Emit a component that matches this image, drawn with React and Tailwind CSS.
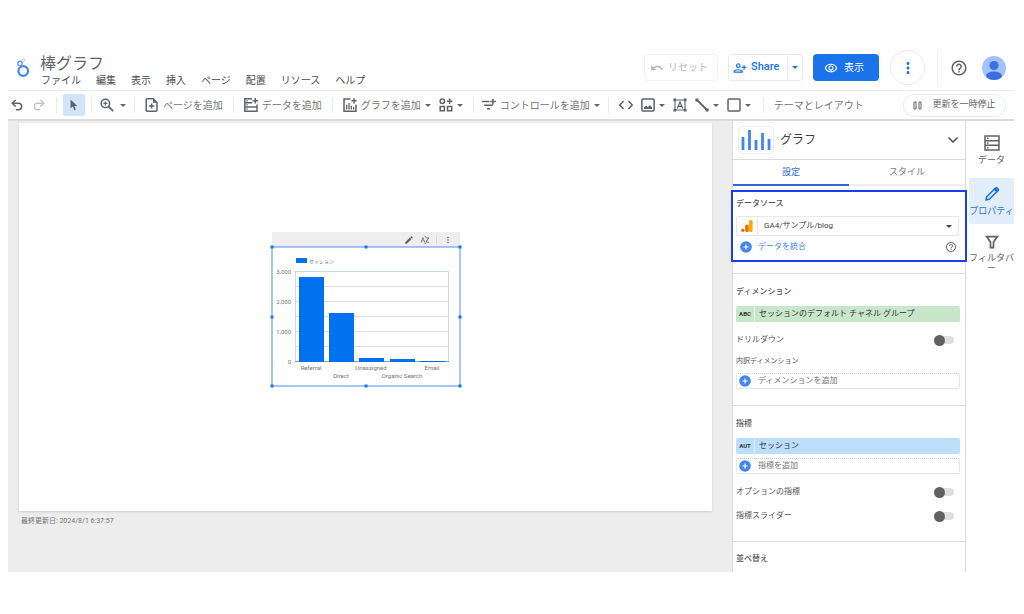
import { useState } from "react";
import {
  MdEdit,
  MdHelpOutline,
  MdMoreVert,
  MdOutlinePersonAddAlt1,
  MdOutlineRemoveRedEye,
  MdSortByAlpha,
  MdUndo,
} from "react-icons/md";
import { Undo2, Redo2 } from "lucide-react";

const menus = ["ファイル", "編集", "表示", "挿入", "ページ", "配置", "リソース", "ヘルプ"];

const bars = [
  { label: "Referral", x: 27, y: 30, low: false },
  { label: "Direct", x: 57, y: 66, low: true },
  { label: "Unassigned", x: 87, y: 111, low: false },
  { label: "Organic Search", x: 118, y: 112, low: true },
  { label: "Email", x: 148, y: 114, low: false },
];

const handles = [
  [0, 0], [94, 0], [188, 0],
  [0, 70], [188, 70],
  [0, 139], [94, 139], [188, 139],
];

function Caret() {
  return (
    <svg viewBox="0 0 6 3" className="w-1.5 h-[3px] shrink-0" fill="currentColor">
      <path d="M0 0h6L3 3z" />
    </svg>
  );
}

function Sep() {
  return <div className="w-px h-4 bg-[#e8eaed] shrink-0" />;
}

function Plus() {
  return (
    <svg viewBox="0 0 12 12" className="w-3 h-3 shrink-0">
      <circle cx="6" cy="6" r="5.8" fill="#4285f4" />
      <path d="M6 3.4v5.2M3.4 6h5.2" stroke="#fff" strokeWidth="1.2" />
    </svg>
  );
}

function Logo() {
  return (
    <svg viewBox="0 0 14 20" className="w-3.5 h-5 shrink-0" fill="none" stroke="#4285f4">
      <circle cx="7.2" cy="13" r="4.8" strokeWidth="2.2" />
      <circle cx="4" cy="5.4" r="2.2" strokeWidth="1.4" stroke="#669df6" />
      <circle cx="7.4" cy="2.2" r="1.4" strokeWidth="1" stroke="#aecbfa" />
    </svg>
  );
}

function Avatar() {
  return (
    <svg viewBox="0 0 24 24" className="w-6 h-6">
      <clipPath id="avatar">
        <circle cx="12" cy="12" r="12" />
      </clipPath>
      <g clipPath="url(#avatar)">
        <rect width="24" height="24" fill="#a0c3ff" />
        <circle cx="12" cy="9.5" r="4.6" fill="#3b6fe0" />
        <ellipse cx="12" cy="20" rx="8" ry="4.6" fill="#3b6fe0" />
      </g>
    </svg>
  );
}

// 14px outline icons of the toolbar share this frame
function Icon({ children }) {
  return (
    <svg viewBox="0 0 14 14" className="w-3.5 h-3.5 shrink-0" fill="none" stroke="currentColor" strokeWidth="1.5">
      {children}
    </svg>
  );
}

function ZoomIcon() {
  return (
    <Icon>
      <circle cx="5.4" cy="5.4" r="4.2" />
      <path d="M8.600 8.600l4.600 4.600" strokeWidth="1.800" />
      <path d="M5.400 3.400v4M3.400 5.400h4" strokeWidth="1.200" />
    </Icon>
  );
}

function AddPageIcon() {
  return (
    <Icon>
      <path d="M8.200.8H2.200q-1 0-1 1v10.400q0 1 1 1h8.800q1 0 1-1V4.600z" />
      <path d="M8 .8v4h4z" fill="currentColor" stroke="none" />
      <path d="M6.600 5.400v5.200M4 8h5.200" />
    </Icon>
  );
}

function AddDataIcon() {
  return (
    <Icon>
      <path d="M8 .8H.8v4h7.400M.8 4.800v4.200h12.200V6.500M.8 9v4.200h12.200V9" />
      <path d="M11.300 0v5.400M8.600 2.700H14" />
      <path d="M2.300 2.800h1.400M2.300 6.900h1.400M2.300 11.100h1.400" strokeWidth="1.200" />
    </Icon>
  );
}

function AddChartIcon() {
  return (
    <Icon>
      <path d="M7.500 1H1v12.200h12V6.800" />
      <path d="M11 .2v5.200M8.400 2.800h5.200" />
      <path d="M3.700 11.500V6.800M6 11.500V5M8.300 11.500V7.800M10.600 11.500V9" strokeWidth="1.300" />
    </Icon>
  );
}

function WidgetsIcon() {
  return (
    <Icon>
      <circle cx="3.3" cy="3.3" r="2.2" />
      <path d="M10.6.6v5.4M7.900 3.300h5.400M1.200 8.600h4.200v4.200H1.200zM8.500 8.600h4.200v4.200H8.500z" />
    </Icon>
  );
}

function ControlIcon() {
  return (
    <Icon>
      <path d="M0 3.600h7.400M2.200 7.200h8.600M4.800 10.800h3.400M11 .8v5.600M8.200 3.600h5.600" />
    </Icon>
  );
}

function CodeIcon() {
  return (
    <Icon>
      <path d="M4.600 3 .9 7l3.700 4M9.400 3l3.700 4-3.700 4" />
    </Icon>
  );
}

function ImageIcon() {
  return (
    <Icon>
      <rect x=".9" y=".9" width="12.200" height="12.200" rx="1" />
      <path d="M3 11V9.500L5.200 7.500 7 9.200 9 7l2.200 2.500V11z" fill="currentColor" stroke="none" />
    </Icon>
  );
}

function TextBoxIcon() {
  return (
    <Icon>
      <path d="M2 2h10v10H2z" strokeWidth="1.100" />
      <path d="M4.300 10.400 7 3.800l2.700 6.600M5.200 8.400h3.600" strokeWidth="1.200" />
      <path
        d="M.4.400h2.800v2.800H.4zM10.800.400h2.800v2.800h-2.800zM.4 10.800h2.800v2.800H.4zM10.800 10.800h2.800v2.800h-2.800z"
        fill="currentColor"
        stroke="none"
      />
    </Icon>
  );
}

function LineIcon() {
  return (
    <Icon>
      <path d="M2 2l10 10" strokeWidth="1.800" />
      <path d="M.4.600h3v3h-3zM10.600 10.600h3v3h-3z" fill="currentColor" stroke="none" />
    </Icon>
  );
}

function RectIcon() {
  return (
    <Icon>
      <rect x="1" y="1" width="12" height="12" rx="1" />
    </Icon>
  );
}

function PropertyIcon() {
  return (
    <svg viewBox="0 0 16 16" className="w-4 h-4 shrink-0" fill="none" stroke="currentColor" strokeWidth="1.6">
      <path d="M2 14l.7-3.200L10.800 2.700l2.500 2.500-8.100 8.100z" strokeLinejoin="round" />
      <path d="M9.300 3.200 11.300 1.200q1-.8 2 0l1.500 1.500q.8 1 0 2L12.800 6.700z" fill="currentColor" stroke="none" />
    </svg>
  );
}

function FilterIcon() {
  return (
    <svg viewBox="0 0 16 16" className="w-4 h-4 shrink-0" fill="none" stroke="currentColor" strokeWidth="1.7">
      <path d="M2.600 2.600h10.800L9.500 8v5.600h-3V8z" />
    </svg>
  );
}

function Header() {
  return (
    <header className="flex items-center h-[46px] border-b border-[#e8eaed] text-[#5f6368]">
      <div className="pl-2">
        <Logo />
      </div>
      <div className="pl-2.5 pt-2">
        <h1 className="text-base leading-[18px]">棒グラフ</h1>
        <nav className="flex gap-[15px] pl-px text-[10px] leading-4 text-[#4a4d51]">
          {menus.map((m) => (
            <button key={m} type="button" className="whitespace-nowrap">
              {m}
            </button>
          ))}
        </nav>
      </div>

      <div className="flex items-center ml-auto shrink-0 text-[10px]">
        <button
          type="button"
          disabled
          className="flex items-center justify-center gap-1 w-[74px] h-[27px] pr-1 border border-[#f1f3f4] rounded-sm text-[#b4b7ba]"
        >
          <MdUndo size={14} />
          リセット
        </button>

        <div className="flex ml-2.5 h-[27px] border border-[#e8eaed] rounded-sm text-[#1a73e8]">
          <button type="button" className="flex items-center gap-1 px-1 w-[58px] text-[11px] font-medium">
            <MdOutlinePersonAddAlt1 size={14} />
            Share
          </button>
          <button type="button" aria-label="共有オプション" className="flex items-center px-1 border-l border-[#e8eaed]">
            <Caret />
          </button>
        </div>

        <button
          type="button"
          className="flex items-center justify-center gap-1.5 ml-2.5 w-[66px] h-[27px] pr-1 rounded-sm bg-[#1a73e8] text-white"
        >
          <MdOutlineRemoveRedEye size={14} />
          表示
        </button>

        <button
          type="button"
          aria-label="その他"
          className="flex items-center justify-center ml-[11px] w-[35px] h-[35px] border border-[#e8eaed] rounded-full text-[#1a73e8]"
        >
          <MdMoreVert size={18} />
        </button>

        <div className="ml-3 w-px h-8 bg-[#eceef0]" />
        <button type="button" aria-label="ヘルプ" className="ml-3">
          <MdHelpOutline size={18} />
        </button>
        <button type="button" aria-label="アカウント" className="ml-3.5 mr-2">
          <Avatar />
        </button>
      </div>
    </header>
  );
}

function Toolbar() {
  const item = "flex items-center gap-1 shrink-0 whitespace-nowrap";
  const text = "text-[#757575]";

  return (
    <div className="flex items-center h-[30px] border-b-2 border-[#dadce0] text-[10px] text-[#5f6368]">
      <div className="flex gap-2 pl-0.5 pr-2.5">
        <button type="button" aria-label="元に戻す">
          <Undo2 size={14} strokeWidth={2.5} />
        </button>
        <button type="button" aria-label="やり直す" className="text-[#c4c7ca]">
          <Redo2 size={14} strokeWidth={2.5} />
        </button>
      </div>
      <Sep />
      <div className="px-1.5">
        <button
          type="button"
          aria-label="選択"
          className="flex items-center justify-center w-[22px] h-[22px] rounded-xs bg-[#d2e3fc]"
        >
          <svg viewBox="0 0 8 12" className="w-2 h-3" fill="currentColor">
            <path d="M.5.5v9l2.200-2 1.600 3.800 1.600-.7-1.600-3.700h3z" />
          </svg>
        </button>
      </div>
      <Sep />
      <div className="px-2">
        <button type="button" aria-label="ズーム" className="flex items-center gap-1.5">
          <ZoomIcon />
          <Caret />
        </button>
      </div>
      <Sep />
      <div className="px-2.5">
        <button type="button" className={item}>
          <AddPageIcon />
          <span className={text}>ページを追加</span>
        </button>
      </div>
      <Sep />
      <div className="px-2.5">
        <button type="button" className={item}>
          <AddDataIcon />
          <span className={text}>データを追加</span>
        </button>
      </div>
      <Sep />
      <div className="flex gap-2 px-2.5">
        <button type="button" className={item}>
          <AddChartIcon />
          <span className={text}>グラフを追加</span>
          <Caret />
        </button>
        <button type="button" aria-label="ビジュアリゼーション" className={item}>
          <WidgetsIcon />
          <Caret />
        </button>
      </div>
      <Sep />
      <div className="px-2">
        <button type="button" className={item}>
          <ControlIcon />
          <span className={text}>コントロールを追加</span>
          <Caret />
        </button>
      </div>
      <Sep />
      <div className="flex gap-2 pl-2.5 pr-3">
        <button type="button" aria-label="URL 埋め込み" className={item}>
          <CodeIcon />
        </button>
        <button type="button" aria-label="画像" className={item}>
          <ImageIcon />
          <Caret />
        </button>
        <button type="button" aria-label="テキスト" className={item}>
          <TextBoxIcon />
        </button>
        <button type="button" aria-label="線" className={item}>
          <LineIcon />
          <Caret />
        </button>
        <button type="button" aria-label="図形" className={item}>
          <RectIcon />
          <Caret />
        </button>
      </div>
      <Sep />
      <button type="button" className={`px-2.5 whitespace-nowrap ${text}`}>
        テーマとレイアウト
      </button>

      <button
        type="button"
        className="flex items-center justify-center gap-2.5 ml-auto mr-2 w-[103px] h-[23px] shrink-0 border border-[#e8eaed] rounded-full text-[9px]"
      >
        <svg viewBox="0 0 9 9" className="w-[9px] h-[9px]" fill="none" stroke="currentColor">
          <path d="M1 1h2v7H1zM6 1h2v7H6z" />
        </svg>
        更新を一時停止
      </button>
    </div>
  );
}

function BarChart() {
  return (
    <svg viewBox="0 0 188 139" className="w-[188px] h-[139px] overflow-visible" fontSize="6" fill="#757575">
      <rect x="24" y="11" width="11" height="5" fill="#0072f0" />
      <text x="37" y="15.5" fontSize="5">
        セッション
      </text>

      {[39.5, 54.5, 69.5, 84.5, 99.5].map((y) => (
        <path key={y} d={`M24 ${y}h152`} stroke="#e0e0e0" />
      ))}
      <rect x="23.5" y="24.5" width="153" height="90" fill="none" stroke="#c6dafa" />

      {["3,000", "2,000", "1,000", "0"].map((t, i) => (
        <text key={t} x="19" y={26.5 + i * 30} textAnchor="end">
          {t}
        </text>
      ))}

      <path d="M23 114.5h154" stroke="#7f9cc4" />
      {bars.map((b) => (
        <g key={b.label}>
          <rect x={b.x} y={b.y} width="25" height={115 - b.y} fill="#0072f0" />
          <text x={b.x + 12} y={b.low ? 131 : 123} textAnchor="middle">
            {b.label}
          </text>
        </g>
      ))}

      <rect width="188" height="139" fill="none" stroke="#4a90f0" />
      {handles.map(([x, y]) => (
        <rect key={`${x}-${y}`} x={x - 1.5} y={y - 1.5} width="3" height="3" fill="#1a73e8" />
      ))}
    </svg>
  );
}

function Canvas() {
  return (
    <main className="flex-1 min-w-0 bg-[#ededed] pl-[11px] pr-5 pt-0.5">
      <div className="relative w-full aspect-[692/387] bg-white shadow-sm">
        {/* selected chart, placed freely on the report page */}
        <div className="absolute left-[253px] top-[109px] w-[188px]">
          <div className="flex items-center justify-end gap-1.5 h-[15px] pr-[7px] bg-[#eeeeee] text-[#5f6368]">
            <MdEdit size={10} />
            <MdSortByAlpha size={10} />
            <div className="w-px h-2 bg-[#dadce0]" />
            <MdMoreVert size={10} />
          </div>
          <BarChart />
        </div>
      </div>
      <p className="pl-0.5 pt-1 text-[7px] leading-3 text-[#757575]">最終更新日: 2024/8/1 6:37:57</p>
    </main>
  );
}

function Toggle({ id, label }) {
  return (
    <div className="flex items-center justify-between h-4 pr-1.5">
      <label htmlFor={id}>{label}</label>
      <input
        id={id}
        type="checkbox"
        className="appearance-none flex items-center w-5 h-2 rounded-full bg-[#e0e0e0] before:w-[11px] before:h-[11px] before:rounded-full before:bg-[#616161] checked:before:ml-auto"
      />
    </div>
  );
}

function Chip({ type, className, children }) {
  return (
    <button type="button" className={`flex items-center w-full h-4 rounded-xs text-left text-[#333333] ${className}`}>
      <span className="flex items-center justify-center w-[19px] h-full border-r border-white/50 text-[6px] font-bold">
        {type}
      </span>
      <span className="pl-1">{children}</span>
    </button>
  );
}

function AddField({ children }) {
  return (
    <button
      type="button"
      className="flex items-center gap-[7px] w-full h-4 px-0.5 border border-dotted border-[#cccccc] rounded-xs text-[#757575]"
    >
      <Plus />
      {children}
    </button>
  );
}

function Panel() {
  const [tab, setTab] = useState("設定");

  return (
    <aside className="w-[234px] shrink-0 border-x border-[#dadce0] bg-white text-[8px] leading-3 text-[#555555]">
      <div className="flex items-center gap-1.5 h-[39px] pl-[5px] pr-[7px] border-b border-[#dadce0]">
        <div className="flex items-center justify-center w-9 h-7 border border-[#eceef0] rounded-sm">
          <svg viewBox="0 0 30 20" className="w-[30px] h-5" stroke="#4285f4" strokeWidth="2.8">
            <path d="M2 7v13M8.500 0v20M15 10v10M21.500 3v17M28 9v11" />
          </svg>
        </div>
        <h2 className="text-xs text-[#424242]">グラフ</h2>
        <svg viewBox="0 0 10 6" className="w-2.5 h-1.5 ml-auto" fill="none" stroke="#424242" strokeWidth="1.3">
          <path d="M.5.500 5 5 9.500.500" />
        </svg>
      </div>

      <div role="tablist" className="flex text-[9px]">
        {["設定", "スタイル"].map((t) => (
          <button
            key={t}
            type="button"
            role="tab"
            aria-selected={tab === t}
            onClick={() => setTab(t)}
            className={`flex-1 h-[26px] border-b-2 ${
              tab === t ? "border-[#3367d6] text-[#3367d6]" : "border-[#eeeeee] text-[#757575]"
            }`}
          >
            {t}
          </button>
        ))}
      </div>

      <section className="-mx-0.5 mt-1 pl-[3px] pr-1.5 pt-1.5 h-[72px] border-2 border-[#1a3df0]">
        <label htmlFor="source" className="block font-medium">
          データソース
        </label>
        <div className="relative flex items-center h-5 mt-1.5 border border-[#e8e8e8] rounded-xs">
          <svg viewBox="0 0 12 12" className="w-3 h-3 mx-1 shrink-0">
            <rect x="8" width="3.600" height="12" rx="1.500" fill="#f9ab00" />
            <rect x="4.200" y="4.500" width="3.600" height="7.500" rx="1.500" fill="#e37400" />
            <circle cx="1.800" cy="10.200" r="1.700" fill="#e37400" />
          </svg>
          <select
            id="source"
            className="appearance-none flex-1 h-full pl-1.5 border-l border-[#e8e8e8] bg-transparent text-[8px] text-[#424242]"
          >
            <option>GA4/サンプル/blog</option>
          </select>
          <div className="absolute right-1.5 pointer-events-none text-[#424242]">
            <Caret />
          </div>
        </div>
        <div className="flex items-center justify-between h-[22px] pl-1 pr-0.5">
          <button type="button" className="flex items-center gap-1.5 text-[#4285f4]">
            <Plus />
            データを統合
          </button>
          <button type="button" aria-label="統合のヘルプ" className="text-[#757575]">
            <MdHelpOutline size={12} />
          </button>
        </div>
      </section>

      <section className="mt-[11px] pl-[3px] pr-[5px] pt-3 border-t border-[#dadce0]">
        <h3 className="pb-2 font-medium">ディメンション</h3>
        <Chip type="ABC" className="bg-[#c8e6c9]">
          セッションのデフォルト チャネル グループ
        </Chip>
        <div className="pt-2.5">
          <Toggle id="drilldown" label="ドリルダウン" />
        </div>
        <h4 className="pt-[7px] pb-1.5 text-[7px]">内訳ディメンション</h4>
        <AddField>ディメンションを追加</AddField>
      </section>

      <section className="mt-4 pl-[3px] pr-[5px] pt-3 pb-[17px] border-t border-[#dadce0]">
        <h3 className="pb-2 font-medium">指標</h3>
        <Chip type="AUT" className="bg-[#bbdefb]">
          セッション
        </Chip>
        <div className="pt-1">
          <AddField>指標を追加</AddField>
        </div>
        <div className="flex flex-col gap-2 pt-2.5">
          <Toggle id="optional" label="オプションの指標" />
          <Toggle id="slider" label="指標スライダー" />
        </div>
      </section>

      <section className="pl-[3px] pt-[11px] pb-[7px] border-t border-[#dadce0]">
        <h3 className="font-medium">並べ替え</h3>
      </section>
    </aside>
  );
}

function Rail() {
  const item = "flex flex-col items-center w-full gap-[3px] text-[9px] leading-3";

  return (
    <nav className="w-12 shrink-0 pl-[3px] text-[#616161]">
      <button type="button" className={`${item} h-[57px] pt-3.5`}>
        <svg viewBox="0 0 16 16" className="w-4 h-4" fill="none" stroke="currentColor" strokeWidth="1.5">
          <path d="M1 1h14v14H1zM1 5.700h14M1 10.300h14" />
          <path d="M3 3.300h1.500M3 8h1.500M3 12.700h1.500" />
        </svg>
        データ
      </button>
      <button type="button" className={`${item} h-[46px] pt-2 rounded-xs bg-[#e3eefd] text-[#1a73e8]`}>
        <PropertyIcon />
        プロパティ
      </button>
      <button type="button" className={`${item} pt-2.5`}>
        <FilterIcon />
        <span className="break-all leading-[10px]">フィルタバー</span>
      </button>
    </nav>
  );
}

export default function App() {
  return (
    <div className="min-h-screen bg-white pt-[45px] pl-2 pr-2.5 font-[Roboto,'Noto_Sans_CJK_JP',sans-serif]">
      <Header />
      <Toolbar />
      <div className="flex">
        <Canvas />
        <Panel />
        <Rail />
      </div>
    </div>
  );
}
